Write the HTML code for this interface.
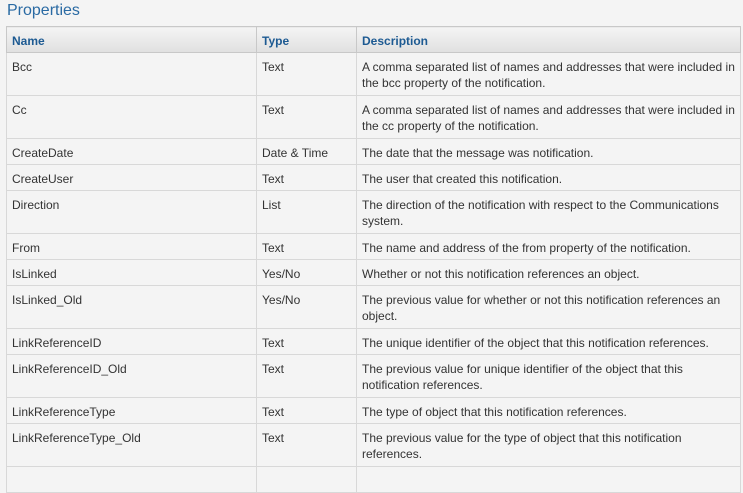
<!DOCTYPE html>
<html><head><style>
body{margin:0;background:#f4f4f4;font-family:"Liberation Sans",sans-serif;width:743px;height:470px;overflow:hidden}
h2{margin:0;position:absolute;left:7px;top:1px;font-weight:normal;font-size:16px;color:#2a6aa3;line-height:20px}
table{position:absolute;left:6px;top:26px;border-collapse:collapse;width:735px;table-layout:fixed}
td,th{border:1px solid #d8d8d8;padding:6px 5px 0 5px;vertical-align:top;font-size:12px;line-height:16px;color:#333;text-align:left;overflow:hidden}
th{background:linear-gradient(#f4f4f4,#e0e0e0);color:#1d5a92;font-weight:bold;height:19px;border-color:#c8c8c8;padding-top:6px}
tr.s td{height:19px}
tr.d td{height:36px}
</style></head><body>
<h2>Properties</h2>
<table>
<colgroup><col style="width:250px"><col style="width:100px"><col></colgroup>
<tr><th>Name</th><th>Type</th><th>Description</th></tr>
<tr class="d"><td>Bcc</td><td>Text</td><td>A comma separated list of names and addresses that were included in the bcc property of the notification.</td></tr>
<tr class="d"><td>Cc</td><td>Text</td><td>A comma separated list of names and addresses that were included in the cc property of the notification.</td></tr>
<tr class="s"><td>CreateDate</td><td>Date &amp; Time</td><td>The date that the message was notification.</td></tr>
<tr class="s"><td>CreateUser</td><td>Text</td><td>The user that created this notification.</td></tr>
<tr class="d"><td>Direction</td><td>List</td><td>The direction of the notification with respect to the Communications system.</td></tr>
<tr class="s"><td>From</td><td>Text</td><td>The name and address of the from property of the notification.</td></tr>
<tr class="s"><td>IsLinked</td><td>Yes/No</td><td>Whether or not this notification references an object.</td></tr>
<tr class="d"><td>IsLinked_Old</td><td>Yes/No</td><td>The previous value for whether or not this notification references an object.</td></tr>
<tr class="s"><td>LinkReferenceID</td><td>Text</td><td>The unique identifier of the object that this notification references.</td></tr>
<tr class="d"><td>LinkReferenceID_Old</td><td>Text</td><td>The previous value for unique identifier of the object that this notification references.</td></tr>
<tr class="s"><td>LinkReferenceType</td><td>Text</td><td>The type of object that this notification references.</td></tr>
<tr class="d"><td>LinkReferenceType_Old</td><td>Text</td><td>The previous value for the type of object that this notification references.</td></tr>
<tr class="s"><td></td><td></td><td></td></tr>
</table>
</body></html>
